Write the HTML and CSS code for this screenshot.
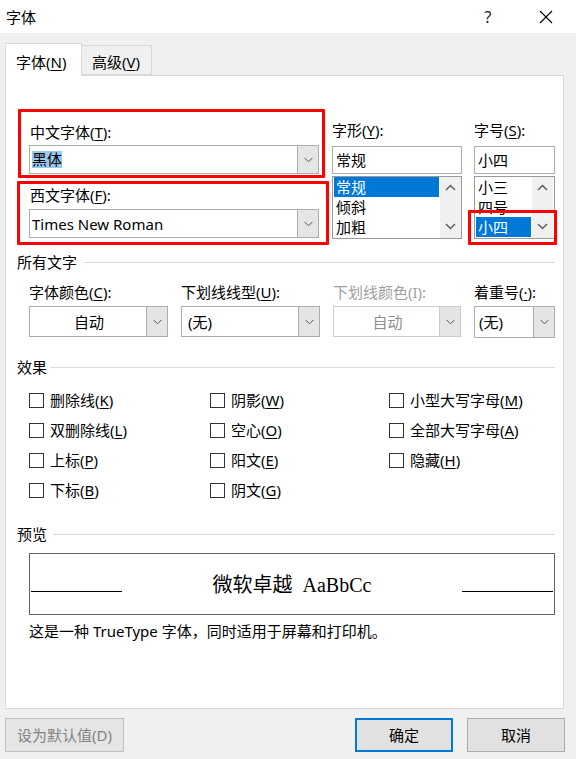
FILE: index.html
```html
<!DOCTYPE html>
<html lang="zh-CN">
<head>
<meta charset="utf-8">
<title>字体</title>
<link rel="stylesheet" href="styles.css">
</head>
<body>
<div class="dialog">
  <header class="titlebar">
    <span class="title">字体</span>
    <span class="help">?</span>
    <span class="close"><svg width="14" height="14" viewBox="0 0 14 14"><path d="M1 1L13 13M13 1L1 13" stroke="#000" stroke-width="1.1" fill="none"/></svg></span>
  </header>

  <nav class="tabs">
    <div class="tab active">字体(<u>N</u>)</div>
    <div class="tab">高级(<u>V</u>)</div>
  </nav>

  <main class="panel">
    <section class="fontsec">
      <div class="col-left">
        <div class="redbox rb1">
          <div class="lbl">中文字体(<u>T</u>):</div>
          <div class="combo">
            <span class="val"><span class="hl">黑体</span></span>
            <span class="dd"><svg width="9" height="6" viewBox="0 0 9 6"><path d="M0.5 0.8L4.5 4.8L8.5 0.8" stroke="#555" stroke-width="1" fill="none"/></svg></span>
          </div>
        </div>
        <div class="redbox rb2">
          <div class="lbl">西文字体(<u>F</u>):</div>
          <div class="combo">
            <span class="val">Times New Roman</span>
            <span class="dd"><svg width="9" height="6" viewBox="0 0 9 6"><path d="M0.5 0.8L4.5 4.8L8.5 0.8" stroke="#555" stroke-width="1" fill="none"/></svg></span>
          </div>
        </div>
      </div>

      <div class="col-style">
        <div class="lbl">字形(<u>Y</u>):</div>
        <div class="edit">常规</div>
        <div class="list">
          <div class="items">
            <div class="item selected">常规</div>
            <div class="item">倾斜</div>
            <div class="item">加粗</div>
          </div>
          <div class="sb">
            <svg width="11" height="7" viewBox="0 0 11 7"><path d="M1 6L5.5 1.5L10 6" stroke="#606060" stroke-width="1.5" fill="none"/></svg>
            <svg width="11" height="7" viewBox="0 0 11 7"><path d="M1 1L5.5 5.5L10 1" stroke="#606060" stroke-width="1.5" fill="none"/></svg>
          </div>
        </div>
      </div>

      <div class="col-size">
        <div class="lbl">字号(<u>S</u>):</div>
        <div class="edit">小四</div>
        <div class="list">
          <div class="items">
            <div class="item">小三</div>
            <div class="item">四号</div>
            <div class="item selected">小四</div>
          </div>
          <div class="sb">
            <svg width="11" height="7" viewBox="0 0 11 7"><path d="M1 6L5.5 1.5L10 6" stroke="#606060" stroke-width="1.5" fill="none"/></svg>
            <svg width="11" height="7" viewBox="0 0 11 7"><path d="M1 1L5.5 5.5L10 1" stroke="#606060" stroke-width="1.5" fill="none"/></svg>
          </div>
        </div>
        <div class="redmark"></div>
      </div>
    </section>

    <div class="group-head head-all">所有文字</div>
    <section class="allgrid">
      <div class="lbl">字体颜色(<u>C</u>):</div>
      <div class="lbl">下划线线型(<u>U</u>):</div>
      <div class="lbl disabled">下划线颜色(I):</div>
      <div class="lbl">着重号(<u>·</u>):</div>
      <div class="combo c2">
        <span class="val center">自动</span>
        <span class="dd"><svg width="9" height="6" viewBox="0 0 9 6"><path d="M0.5 0.8L4.5 4.8L8.5 0.8" stroke="#555" stroke-width="1" fill="none"/></svg></span>
      </div>
      <div class="combo c2">
        <span class="val pad">(无)</span>
        <span class="dd"><svg width="9" height="6" viewBox="0 0 9 6"><path d="M0.5 0.8L4.5 4.8L8.5 0.8" stroke="#555" stroke-width="1" fill="none"/></svg></span>
      </div>
      <div class="combo c2 off">
        <span class="val center">自动</span>
        <span class="dd"><svg width="9" height="6" viewBox="0 0 9 6"><path d="M0.5 0.8L4.5 4.8L8.5 0.8" stroke="#555" stroke-width="1" fill="none"/></svg></span>
      </div>
      <div class="combo c2 tall">
        <span class="val pad4">(无)</span>
        <span class="dd"><svg width="9" height="6" viewBox="0 0 9 6"><path d="M0.5 0.8L4.5 4.8L8.5 0.8" stroke="#555" stroke-width="1" fill="none"/></svg></span>
      </div>
    </section>

    <div class="group-head head-fx">效果</div>
    <section class="fxgrid">
      <label class="chk"><span class="box"></span><span>删除线(<u>K</u>)</span></label>
      <label class="chk"><span class="box"></span><span>阴影(<u>W</u>)</span></label>
      <label class="chk"><span class="box"></span><span>小型大写字母(<u>M</u>)</span></label>
      <label class="chk"><span class="box"></span><span>双删除线(<u>L</u>)</span></label>
      <label class="chk"><span class="box"></span><span>空心(<u>O</u>)</span></label>
      <label class="chk"><span class="box"></span><span>全部大写字母(<u>A</u>)</span></label>
      <label class="chk"><span class="box"></span><span>上标(<u>P</u>)</span></label>
      <label class="chk"><span class="box"></span><span>阳文(<u>E</u>)</span></label>
      <label class="chk"><span class="box"></span><span>隐藏(<u>H</u>)</span></label>
      <label class="chk"><span class="box"></span><span>下标(<u>B</u>)</span></label>
      <label class="chk"><span class="box"></span><span>阴文(<u>G</u>)</span></label>
    </section>

    <div class="group-head head-pv">预览</div>
    <div class="preview">
      <span class="pline"></span>
      <span class="ptext"><span class="pcn">微软卓越</span><span class="pen">AaBbCc</span></span>
      <span class="pline"></span>
    </div>
    <p class="desc">这是一种 TrueType 字体，同时适用于屏幕和打印机。</p>
  </main>

  <footer class="buttons">
    <button class="btn default" disabled>设为默认值(D)</button>
    <span class="spacer"></span>
    <button class="btn ok">确定</button>
    <button class="btn cancel">取消</button>
  </footer>
</div>
</body>
</html>
```

FILE: styles.css
```css
* { box-sizing: border-box; }

html, body {
  margin: 0;
  padding: 0;
}

body {
  width: 576px;
  height: 759px;
  overflow: hidden;
  background: #f0f0f0;
  font-family: "Noto Sans", "Noto Sans CJK SC", sans-serif;
  font-size: 15px;
  line-height: 18px;
  color: #000;
}

u { text-decoration: underline; text-underline-offset: 2px; text-decoration-thickness: 1px; }

/* title bar */
.titlebar {
  height: 33px;
  background: #fff;
  display: flex;
  align-items: center;
  padding-left: 6px;
}
.title { flex: 1; }
.help { width: 20px; text-align: center; font-size: 16px; color: #222; }
.close {
  width: 20px;
  margin-left: 38px;
  margin-right: 20px;
  display: flex;
  justify-content: center;
}

/* tabs */
.tabs {
  height: 42px;
  display: flex;
  align-items: flex-end;
  padding-left: 5px;
}
.tab {
  border: 1px solid #d9d9d9;
  background: #f0f0f0;
}
.tab.active {
  width: 77px;
  height: 33px;
  margin-bottom: -1px;
  border-bottom: none;
  background: #fff;
  padding: 9px 0 0 10px;
  position: relative;
  z-index: 1;
}
.tab:not(.active) {
  width: 70px;
  height: 30px;
  border-left: none;
  padding: 7px 0 0 10px;
}

/* panel */
.panel {
  margin-left: 5px;
  width: 559px;
  height: 634px;
  background: #fff;
  border: 1px solid #d9d9d9;
}

.lbl { height: 18px; white-space: nowrap; }
.lbl.disabled { color: #a0a0a0; }

/* font section */
.fontsec {
  display: flex;
  align-items: flex-start;
}
.col-left {
  margin-left: 11px;
  margin-top: 33px;
  width: 312px;
}
.redbox {
  border: 3px solid #f00;
  border-radius: 1px;
}
.rb1 {
  margin-left: 1px;
  width: 307px;
  height: 69px;
  padding: 11px 3px 0 8px;
}
.rb1 .lbl { padding-left: 1px; }
.rb1 .combo { margin-top: 4px; }
.rb2 {
  margin-top: 3px;
  width: 312px;
  height: 64px;
  padding: 2px 7px 0 9px;
}
.rb2 .lbl { padding-left: 1px; }
.rb2 .combo { margin-top: 5px; }

.combo {
  display: flex;
  height: 29px;
  border: 1px solid #adadad;
  background: #fff;
}
.combo .val {
  flex: 1;
  display: flex;
  align-items: center;
  padding-left: 2px;
  white-space: nowrap;
}
.combo .val.center { justify-content: center; }
.combo .val.pad { padding-left: 6px; }
.combo .val.pad4 { padding-left: 4px; }
.hl { background: #99c9ef; line-height: 17px; }
.combo .dd {
  width: 21px;
  background: #e5e5e5;
  border-left: 1px solid #adadad;
  display: flex;
  align-items: center;
  justify-content: center;
}

.col-style {
  margin-left: 3px;
  margin-top: 45px;
  width: 130px;
}
.col-size {
  margin-left: 12px;
  margin-top: 45px;
  width: 81px;
  position: relative;
}
.edit {
  margin-top: 7px;
  height: 28px;
  border: 1px solid #adadad;
  display: flex;
  align-items: center;
  padding-left: 3px;
}
.list {
  margin-top: 2px;
  height: 63px;
  border: 1px solid #9a9a9a;
  display: flex;
  overflow: hidden;
}
.items {
  flex: 1;
  padding: 0 1px;
  overflow: hidden;
}
.item {
  height: 20px;
  line-height: 20px;
  padding-left: 2px;
}
.item.selected { background: #0078d7; color: #fff; }
.sb {
  width: 21px;
  background: #f0f0f0;
  display: flex;
  flex-direction: column;
  justify-content: space-between;
  align-items: center;
  padding: 7px 0 8px;
}
.col-size .sb { margin-right: 1px; }
.redmark {
  position: absolute;
  left: -6px;
  top: 89px;
  width: 89px;
  height: 35px;
  border: 3px solid #f00;
  border-radius: 1px;
}

/* group headers */
.group-head {
  display: flex;
  align-items: center;
  margin-left: 11px;
  margin-right: 8px;
  height: 18px;
}
.group-head::after {
  content: "";
  flex: 1;
  height: 1px;
  background: #dcdcdc;
  margin-left: 6px;
}
.head-fx::after { margin-left: 4px; }
.head-all { margin-top: 8px; }
.head-fx { margin-top: 20px; }
.head-pv { margin-top: 20px; }

/* all text grid */
.allgrid {
  margin-left: 23px;
  margin-top: 12px;
  display: grid;
  grid-template-columns: 139px 139px 128px 81px;
  column-gap: 13px;
  row-gap: 5px;
  align-items: start;
}
.combo.c2 { height: 31px; }
.combo.c2.tall { height: 32px; }
.combo.off { border-color: #cccccc; }
.combo.off .val { color: #8d8d8d; }
.combo.off .dd { border-left-color: #cccccc; }

/* effects */
.fxgrid {
  margin-left: 23px;
  margin-top: 9px;
  display: grid;
  grid-template-columns: 181px 179px auto;
  grid-auto-rows: 30px;
}
.chk {
  display: flex;
  align-items: center;
  gap: 6px;
  white-space: nowrap;
}
.box {
  width: 15px;
  height: 15px;
  border: 1px solid #333;
  background: #fff;
}

/* preview */
.preview {
  margin-left: 23px;
  margin-top: 10px;
  width: 526px;
  height: 62px;
  border: 1px solid #646464;
  display: flex;
  align-items: center;
  justify-content: space-between;
  padding: 0 1px;
}
.pline {
  width: 91px;
  height: 1px;
  background: #000;
  margin-top: 14px;
}
.ptext {
  font-size: 20px;
  line-height: 24px;
  white-space: nowrap;
}
.pcn { font-family: "Noto Sans CJK SC", sans-serif; }
.pen { font-family: "Liberation Serif", serif; margin-left: 10px; }

.desc {
  margin: 7px 0 0 23px;
  height: 18px;
}

/* buttons */
.buttons {
  display: flex;
  margin-top: 9px;
  padding: 0 11px 0 5px;
}
.spacer { flex: 1; }
.btn {
  height: 34px;
  font-family: inherit;
  font-size: 15px;
  line-height: 18px;
  background: #e1e1e1;
  border: 1px solid #adadad;
  color: #000;
  padding: 0;
  margin: 0;
}
.btn.default {
  width: 119px;
  border-color: #bfbfbf;
  background: #e5e5e5;
  color: #838383;
}
.btn.ok {
  width: 98px;
  border: 2px solid #0078d7;
  margin-right: 14px;
}
.btn.cancel { width: 98px; }
```
